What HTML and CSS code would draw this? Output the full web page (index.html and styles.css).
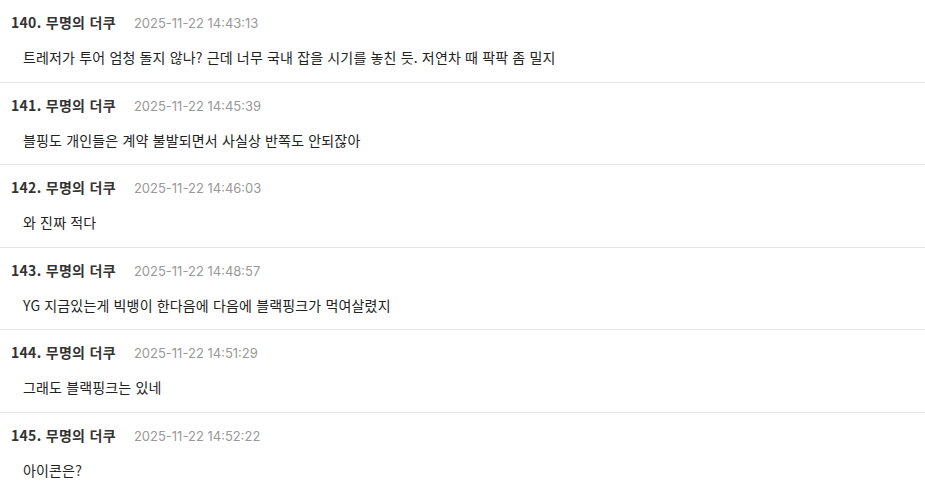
FILE: index.html
```html
<!DOCTYPE html>
<html lang="ko">
<head>
<meta charset="utf-8">
<link rel="stylesheet" href="styles.css">
</head>
<body>
<ul class="comments">
  <li class="comment">
    <div class="meta"><span class="author">140. 무명의 더쿠</span><span class="date">2025-11-22 14:43:13</span></div>
    <p class="body">트레저가 투어 엄청 돌지 않나? 근데 너무 국내 잡을 시기를 놓친 듯. 저연차 때 팍팍 좀 밀지</p>
  </li>
  <li class="comment">
    <div class="meta"><span class="author">141. 무명의 더쿠</span><span class="date">2025-11-22 14:45:39</span></div>
    <p class="body">블핑도 개인들은 계약 불발되면서 사실상 반쪽도 안되잖아</p>
  </li>
  <li class="comment">
    <div class="meta"><span class="author">142. 무명의 더쿠</span><span class="date">2025-11-22 14:46:03</span></div>
    <p class="body">와 진짜 적다</p>
  </li>
  <li class="comment">
    <div class="meta"><span class="author">143. 무명의 더쿠</span><span class="date">2025-11-22 14:48:57</span></div>
    <p class="body">YG 지금있는게 빅뱅이 한다음에 다음에 블랙핑크가 먹여살렸지</p>
  </li>
  <li class="comment">
    <div class="meta"><span class="author">144. 무명의 더쿠</span><span class="date">2025-11-22 14:51:29</span></div>
    <p class="body">그래도 블랙핑크는 있네</p>
  </li>
  <li class="comment">
    <div class="meta"><span class="author">145. 무명의 더쿠</span><span class="date">2025-11-22 14:52:22</span></div>
    <p class="body">아이콘은?</p>
  </li>
</ul>
</body>
</html>
```
FILE: styles.css
```css
html, body {
  margin: 0;
  padding: 0;
  background: #fff;
}
body {
  font-family: "Noto Sans CJK KR", "Noto Sans", sans-serif;
  color: #222;
}
.comments {
  list-style: none;
  margin: 0;
  padding: 0;
}
.comment {
  padding: 12px 0 14.5px 11px;
  border-bottom: 1px solid #e6e6e6;
}
.meta {
  display: flex;
  align-items: baseline;
  gap: 18px;
  height: 20px;
  line-height: 20px;
}
.author {
  font-size: 14px;
  font-weight: 700;
  letter-spacing: 0.3px;
  color: #333;
}
.date {
  font-family: "Inter", "Liberation Sans", sans-serif;
  font-size: 13px;
  color: #999;
}
.body {
  margin: 15px 0 0 12px;
  height: 20px;
  line-height: 20px;
  font-size: 14px;
  letter-spacing: 0.16px;
  color: #222;
}
```
